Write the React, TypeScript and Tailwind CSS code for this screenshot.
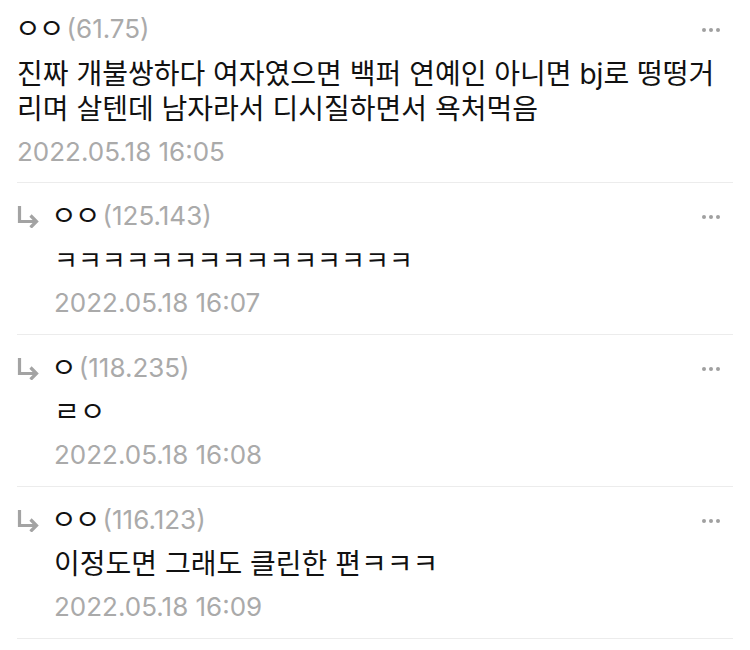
import React from "react";

const font = { fontFamily: '"Inter", "Noto Sans CJK KR", sans-serif' };

type Comment = {
  name: string;
  ip: string;
  body: string;
  date: string;
  reply?: boolean;
  small?: boolean;
};

const comments: Comment[] = [
  {
    name: "ㅇㅇ",
    ip: "(61.75)",
    body: "진짜 개불쌍하다 여자였으면 백퍼 연예인 아니면 bj로 떵떵거리며 살텐데 남자라서 디시질하면서 욕처먹음",
    date: "2022.05.18 16:05",
  },
  {
    name: "ㅇㅇ",
    ip: "(125.143)",
    body: "ㅋㅋㅋㅋㅋㅋㅋㅋㅋㅋㅋㅋㅋㅋㅋ",
    date: "2022.05.18 16:07",
    reply: true,
    small: true,
  },
  { name: "ㅇ", ip: "(118.235)", body: "ㄹㅇ", date: "2022.05.18 16:08", reply: true },
  { name: "ㅇㅇ", ip: "(116.123)", body: "이정도면 그래도 클린한 편ㅋㅋㅋ", date: "2022.05.18 16:09", reply: true },
];

function Dots() {
  return (
    <div className="flex gap-[3px] pt-[2px]">
      <span className="h-[4px] w-[4px] rounded-full bg-[#a0a0a0]" />
      <span className="h-[4px] w-[4px] rounded-full bg-[#a0a0a0]" />
      <span className="h-[4px] w-[4px] rounded-full bg-[#a0a0a0]" />
    </div>
  );
}

function ReplyArrow() {
  return (
    <svg width="22" height="24" viewBox="0 0 22 24" fill="none" className="shrink-0">
      <path d="M2.5 2 V17.5 H19" stroke="#a3a3a3" strokeWidth="3.2" />
      <path d="M13.5 11.5 L19.5 17.5 L13.5 23.5" stroke="#a3a3a3" strokeWidth="3.2" />
    </svg>
  );
}

function Header({ c }: { c: Comment }) {
  return (
    <div className="flex text-[26px] leading-[32px]">
      <span className="-ml-[2px] text-[28px] tracking-[-2px] text-[#111]">{c.name}</span>
      <span className="ml-[4px] text-[#aaaaaa]">{c.ip}</span>
    </div>
  );
}

export default function App() {
  return (
    <div className="min-h-[650px] w-[750px] bg-white px-[17px]" style={font}>
      {comments.map((c, i) => (
        <div key={i} className="border-b border-[#ececec]">
          {c.reply ? (
            <div className="pb-[15px] pt-[17px]">
              <div className="flex items-center justify-between pr-[13px]">
                <div className="flex items-center gap-[14px]">
                  <ReplyArrow />
                  <Header c={c} />
                </div>
                <Dots />
              </div>
              <div className="pl-[37px]">
                <div
                  className={
                    c.small
                      ? "mt-[11px] text-[26px] leading-[35px] text-[#111]"
                      : "mt-[11px] text-[28px] leading-[35px] text-[#111]"
                  }
                >
                  {c.body}
                </div>
                <div className="mt-[9px] text-[26px] leading-[32px] text-[#aaaaaa]">{c.date}</div>
              </div>
            </div>
          ) : (
            <div className="pb-[14px] pt-[13px]">
              <div className="flex items-center justify-between pr-[13px]">
                <Header c={c} />
                <Dots />
              </div>
              <div className="mt-[12px] text-[28px] leading-[35px] text-[#111]">{c.body}</div>
              <div className="mt-[9px] text-[26px] leading-[32px] text-[#aaaaaa]">{c.date}</div>
            </div>
          )}
        </div>
      ))}
    </div>
  );
}
